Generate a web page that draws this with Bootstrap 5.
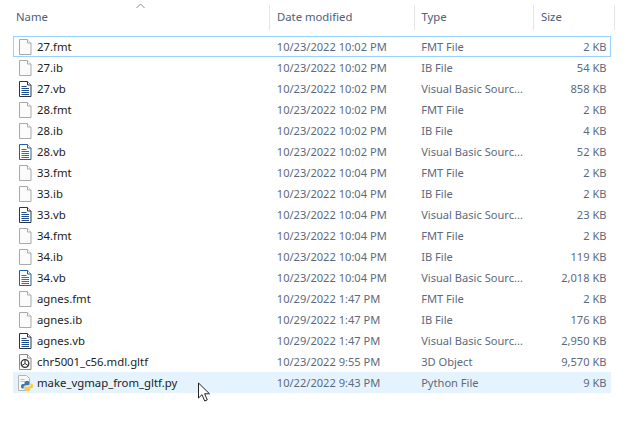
<!DOCTYPE html>
<html lang="en">
<head>
<meta charset="utf-8">
<title>Files</title>
<link href="https://cdn.jsdelivr.net/npm/bootstrap@5.3.0/dist/css/bootstrap.min.css" rel="stylesheet">
<style>
html,body{background:#fff;height:422px;overflow:hidden}
body{font-family:"Noto Sans","Open Sans",sans-serif;font-size:11.1px;color:#5d6a7c;position:relative}
.shell{padding:5px 0 0 13px;width:639px}
.head-row{height:25px;color:#4c607a;margin-bottom:6px;font-size:11.3px}
.c-name{width:257px;padding-left:3px}
.c-date{width:144.500px;padding-left:7px}
.c-type{width:119.500px;padding-left:7px}
.c-size{width:72px;padding-left:7px}
.head-cell{height:25px;border-right:1px solid #e5e5e5;display:flex;align-items:center;padding-bottom:1px}
.head-cell.c-size{width:80.500px}
.file-row{height:21px;width:597.500px;border:1px solid transparent;line-height:1}
.file-row.is-focus{border-color:#99d1ff}
.file-row.is-hover{background:#e5f3ff}
.file-row .c-name{width:256px;color:#1c1c1c;display:flex;align-items:center;gap:4px;padding-left:3px;font-size:11.350px}
.file-row .c-date{width:144.500px}
.file-row .c-type{width:119.500px}
.file-row .c-size{width:76px;padding:0 3px 0 0;text-align:right}
.ficon{flex:none;width:16px;height:16px;display:block}
.sort-mark{position:absolute;left:136px;top:3px;width:9px;height:6px}
.pointer{position:absolute;left:197px;top:382px;width:15px;height:21px}
</style>
</head>
<body>
<svg width="0" height="0" class="position-absolute">
<defs>
<symbol id="i-blank" viewBox="0 0 16 16"><path d="M2.500.5h8l3.500 3.500v11.500H2.500z" fill="#fbfbfb" stroke="#a9a9a9"/><path d="M10.500.5v3.500H14" fill="#fff" stroke="#a9a9a9"/></symbol>
<symbol id="i-doc" viewBox="0 0 16 16"><path d="M2.500.5h8l3.500 3.500v11.500H2.500z" fill="#fff" stroke="#2c3440"/><path d="M10.500.5v3.500H14" fill="#fff" stroke="#2c3440"/><path d="M4.500 5.500h5M4.500 7.500h7.500M4.500 9.500h7.500M4.500 11.500h7.500M4.500 13.500h7.500" stroke="#1d4d8c" fill="none"/></symbol>
<symbol id="i-docb" viewBox="0 0 16 16"><path d="M2.500.5h8l3.500 3.500v11.500H2.500z" fill="#fff" stroke="#1d5fae"/><path d="M10.500.5v3.500H14" fill="#fff" stroke="#1d5fae"/><path d="M4.500 5.500h5M4.500 7.500h7.500M4.500 9.500h7.500M4.500 11.500h7.500M4.500 13.500h7.500" stroke="#1f6fc6" fill="none"/></symbol>
<symbol id="i-3d" viewBox="0 0 16 16"><path d="M2.500.5h8l3.500 3.500v11.500H2.500z" fill="#fbfbfb" stroke="#8a8a8a"/><path d="M10.500.5v3.500H14" fill="#fff" stroke="#8a8a8a"/><circle cx="8" cy="9.500" r="3.800" fill="#fff" stroke="#333" stroke-width="1.300"/><path d="M8 9.500V6M8 9.500l-3 2M8 9.500l3 2" stroke="#333" fill="none"/></symbol>
<symbol id="i-py" viewBox="0 0 16 16"><path d="M1.500.5h8l3 3v6H8v6H1.500z" fill="#f7f7f7" stroke="#b5b5b5"/><path d="M3.500 4.500h4M3.500 6.500h5" stroke="#b9c4d2"/><path d="M10.500 6c-2 0-3 .6-3 1.800V9H5.800C4.500 9 4 10 4 11.400c0 1.300.7 2.100 1.700 2.100h1v-1.500c0-1 .8-1.700 1.800-1.700h2.400c.8 0 1.300-.6 1.300-1.300V7.400C12.200 6.500 11.500 6 10.500 6z" fill="#3c78aa"/><path d="M10.500 16c2 0 3-.6 3-1.800V13h1.200c1.100 0 1.300-1 1.300-2.300 0-1.400-.5-2.200-1.500-2.200h-1v1.500c0 1-.8 1.700-1.800 1.700H9.300c-.8 0-1.300.6-1.300 1.300v1.900c0 1 .9 1.100 2.500 2.100z" fill="#fdc93d"/></symbol>
</defs>
</svg>
<main class="shell">
  <div class="head-row d-flex">
    <div class="head-cell c-name">Name</div>
    <div class="head-cell c-date">Date modified</div>
    <div class="head-cell c-type">Type</div>
    <div class="head-cell c-size">Size</div>
  </div>
  <div class="d-flex flex-column">
    <div class="file-row is-focus d-flex align-items-center"><div class="c-name"><svg class="ficon"><use href="#i-blank"/></svg>27.fmt</div><div class="c-date">10/23/2022 10:02 PM</div><div class="c-type">FMT File</div><div class="c-size">2 KB</div></div>
    <div class="file-row d-flex align-items-center"><div class="c-name"><svg class="ficon"><use href="#i-blank"/></svg>27.ib</div><div class="c-date">10/23/2022 10:02 PM</div><div class="c-type">IB File</div><div class="c-size">54 KB</div></div>
    <div class="file-row d-flex align-items-center"><div class="c-name"><svg class="ficon"><use href="#i-doc"/></svg>27.vb</div><div class="c-date">10/23/2022 10:02 PM</div><div class="c-type">Visual Basic Sourc...</div><div class="c-size">858 KB</div></div>
    <div class="file-row d-flex align-items-center"><div class="c-name"><svg class="ficon"><use href="#i-blank"/></svg>28.fmt</div><div class="c-date">10/23/2022 10:02 PM</div><div class="c-type">FMT File</div><div class="c-size">2 KB</div></div>
    <div class="file-row d-flex align-items-center"><div class="c-name"><svg class="ficon"><use href="#i-blank"/></svg>28.ib</div><div class="c-date">10/23/2022 10:02 PM</div><div class="c-type">IB File</div><div class="c-size">4 KB</div></div>
    <div class="file-row d-flex align-items-center"><div class="c-name"><svg class="ficon"><use href="#i-docb"/></svg>28.vb</div><div class="c-date">10/23/2022 10:02 PM</div><div class="c-type">Visual Basic Sourc...</div><div class="c-size">52 KB</div></div>
    <div class="file-row d-flex align-items-center"><div class="c-name"><svg class="ficon"><use href="#i-blank"/></svg>33.fmt</div><div class="c-date">10/23/2022 10:04 PM</div><div class="c-type">FMT File</div><div class="c-size">2 KB</div></div>
    <div class="file-row d-flex align-items-center"><div class="c-name"><svg class="ficon"><use href="#i-blank"/></svg>33.ib</div><div class="c-date">10/23/2022 10:04 PM</div><div class="c-type">IB File</div><div class="c-size">2 KB</div></div>
    <div class="file-row d-flex align-items-center"><div class="c-name"><svg class="ficon"><use href="#i-doc"/></svg>33.vb</div><div class="c-date">10/23/2022 10:04 PM</div><div class="c-type">Visual Basic Sourc...</div><div class="c-size">23 KB</div></div>
    <div class="file-row d-flex align-items-center"><div class="c-name"><svg class="ficon"><use href="#i-blank"/></svg>34.fmt</div><div class="c-date">10/23/2022 10:04 PM</div><div class="c-type">FMT File</div><div class="c-size">2 KB</div></div>
    <div class="file-row d-flex align-items-center"><div class="c-name"><svg class="ficon"><use href="#i-blank"/></svg>34.ib</div><div class="c-date">10/23/2022 10:04 PM</div><div class="c-type">IB File</div><div class="c-size">119 KB</div></div>
    <div class="file-row d-flex align-items-center"><div class="c-name"><svg class="ficon"><use href="#i-docb"/></svg>34.vb</div><div class="c-date">10/23/2022 10:04 PM</div><div class="c-type">Visual Basic Sourc...</div><div class="c-size">2,018 KB</div></div>
    <div class="file-row d-flex align-items-center"><div class="c-name"><svg class="ficon"><use href="#i-blank"/></svg>agnes.fmt</div><div class="c-date">10/29/2022 1:47 PM</div><div class="c-type">FMT File</div><div class="c-size">2 KB</div></div>
    <div class="file-row d-flex align-items-center"><div class="c-name"><svg class="ficon"><use href="#i-blank"/></svg>agnes.ib</div><div class="c-date">10/29/2022 1:47 PM</div><div class="c-type">IB File</div><div class="c-size">176 KB</div></div>
    <div class="file-row d-flex align-items-center"><div class="c-name"><svg class="ficon"><use href="#i-doc"/></svg>agnes.vb</div><div class="c-date">10/29/2022 1:47 PM</div><div class="c-type">Visual Basic Sourc...</div><div class="c-size">2,950 KB</div></div>
    <div class="file-row d-flex align-items-center"><div class="c-name"><svg class="ficon"><use href="#i-3d"/></svg>chr5001_c56.mdl.gltf</div><div class="c-date">10/23/2022 9:55 PM</div><div class="c-type">3D Object</div><div class="c-size">9,570 KB</div></div>
    <div class="file-row is-hover d-flex align-items-center"><div class="c-name"><svg class="ficon"><use href="#i-py"/></svg>make_vgmap_from_gltf.py</div><div class="c-date">10/22/2022 9:43 PM</div><div class="c-type">Python File</div><div class="c-size">9 KB</div></div>
  </div>
</main>
<svg class="sort-mark" viewBox="0 0 9 6"><path d="M.5 5L4.500 1l4 4" fill="none" stroke="#8a8f96"/></svg>
<svg class="pointer" viewBox="0 0 15 21"><path d="M1.500 1v15l3.500-3.300 2.700 6.300 2.600-1.100-2.700-6.100h4.900z" fill="#fff" stroke="#222"/></svg>
<script src="https://cdn.jsdelivr.net/npm/bootstrap@5.3.0/dist/js/bootstrap.bundle.min.js"></script>
</body>
</html>
